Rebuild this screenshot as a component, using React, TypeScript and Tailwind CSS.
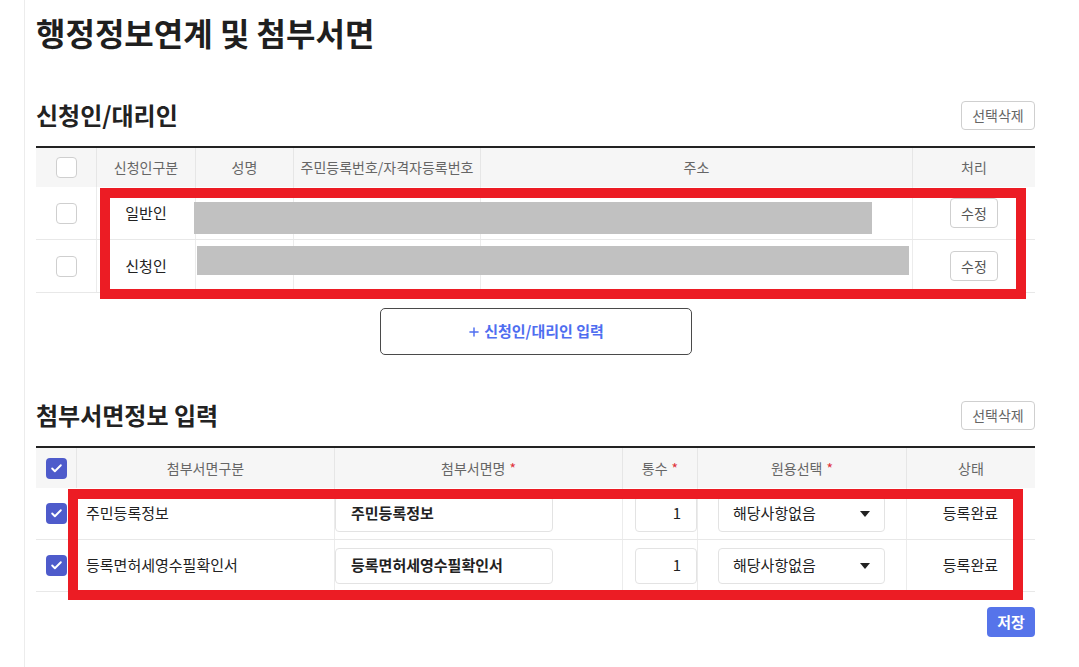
import { Check, Plus } from "lucide-react";

const font = { fontFamily: '"Noto Sans CJK KR", "Noto Sans", sans-serif' };

type Applicant = { kind: string; redact: { left: number; width: number; top: number; height: number } };

const applicants: Applicant[] = [
  { kind: "일반인", redact: { left: 158, width: 678, top: 15, height: 32 } },
  { kind: "신청인", redact: { left: 161, width: 712, top: 6, height: 29 } },
];

const attachments = [
  { category: "주민등록정보", name: "주민등록정보", count: "1", status: "등록완료" },
  { category: "등록면허세영수필확인서", name: "등록면허세영수필확인서", count: "1", status: "등록완료" },
];

function SmallButton({ label }: { label: string }) {
  return (
    <button
      type="button"
      className="h-[29px] w-[74px] rounded-[4px] border border-[#cfcfcf] bg-white text-[14px] text-[#666]"
    >
      {label}
    </button>
  );
}

function SectionHeader({ title }: { title: string }) {
  return (
    <div className="flex items-end justify-between">
      <h2 className="text-[24px] font-bold leading-[30px] text-[#222]">{title}</h2>
      <SmallButton label="선택삭제" />
    </div>
  );
}

function EmptyBox() {
  return <span className="block h-[21px] w-[21px] rounded-[4px] border border-[#cfcfcf] bg-white" />;
}

function CheckedBox() {
  return (
    <span className="flex h-[21px] w-[21px] items-center justify-center rounded-[4px] bg-[#4e5bcb]">
      <Check className="h-[13px] w-[13px] text-white" strokeWidth={3.5} />
    </span>
  );
}

function Required() {
  return <span className="ml-[4px] text-[#e0313a]">*</span>;
}

export default function App() {
  return (
    <div className="min-h-[667px] bg-white text-[#222]" style={font}>
      <div className="relative ml-[24px] w-[1011px] border-l border-[#ececec] pl-[11px] pt-[11px] pb-[30px]">
        <h1 className="text-[32px] font-bold leading-[43px] text-[#1f1f1f]">행정정보연계 및 첨부서면</h1>

        <div className="mt-[46px]">
          <SectionHeader title="신청인/대리인" />
          <div className="mt-[16px] border-t-2 border-[#222]">
            <div className="grid h-[39px] grid-cols-[60px_99px_98px_187px_432px_123px] bg-[#f6f6f6] text-[14px] text-[#666]">
              <div className="flex items-center justify-center">
                <EmptyBox />
              </div>
              <div className="flex items-center justify-center border-l border-[#e6e6e6]">신청인구분</div>
              <div className="flex items-center justify-center border-l border-[#e6e6e6]">성명</div>
              <div className="flex items-center justify-center border-l border-[#e6e6e6]">주민등록번호/자격자등록번호</div>
              <div className="flex items-center justify-center border-l border-[#e6e6e6]">주소</div>
              <div className="flex items-center justify-center border-l border-[#e6e6e6]">처리</div>
            </div>
            {applicants.map((a) => (
              <div
                key={a.kind}
                className="relative grid h-[53px] grid-cols-[60px_99px_98px_187px_432px_123px] border-b border-[#e8e8e8] text-[15px]"
              >
                <div className="flex items-center justify-center">
                  <EmptyBox />
                </div>
                <div className="flex items-center justify-center border-l border-[#ececec]">{a.kind}</div>
                <div className="border-l border-[#ececec]" />
                <div className="border-l border-[#ececec]" />
                <div className="border-l border-[#ececec]" />
                <div className="flex items-center justify-center border-l border-[#ececec]">
                  <button
                    type="button"
                    className="h-[30px] w-[48px] rounded-[4px] border border-[#cfcfcf] bg-white text-[14px] text-[#555]"
                  >
                    수정
                  </button>
                </div>
                <span
                  className="absolute bg-[#c1c1c1]"
                  style={{ left: a.redact.left, width: a.redact.width, top: a.redact.top, height: a.redact.height }}
                />
              </div>
            ))}
          </div>
          <div className="mt-[15px] flex justify-center">
            <button
              type="button"
              className="flex h-[47px] w-[312px] items-center justify-center gap-[3px] rounded-[5px] border border-[#4a4a4a] bg-white text-[15px] font-bold text-[#4f6ef0]"
            >
              <Plus className="h-[14px] w-[14px]" strokeWidth={2.5} />
              신청인/대리인 입력
            </button>
          </div>
        </div>

        <div className="mt-[45px]">
          <SectionHeader title="첨부서면정보 입력" />
          <div className="mt-[16px] border-t-2 border-[#222]">
            <div className="grid h-[40px] grid-cols-[40px_258px_288px_75px_209px_129px] bg-[#f6f6f6] text-[14px] text-[#666]">
              <div className="flex items-center justify-center">
                <CheckedBox />
              </div>
              <div className="flex items-center justify-center border-l border-[#e6e6e6]">첨부서면구분</div>
              <div className="flex items-center justify-center border-l border-[#e6e6e6]">
                첨부서면명
                <Required />
              </div>
              <div className="flex items-center justify-center border-l border-[#e6e6e6]">
                통수
                <Required />
              </div>
              <div className="flex items-center justify-center border-l border-[#e6e6e6]">
                원용선택
                <Required />
              </div>
              <div className="flex items-center justify-center border-l border-[#e6e6e6]">상태</div>
            </div>
            {attachments.map((r) => (
              <div
                key={r.category}
                className="grid h-[52px] grid-cols-[40px_258px_288px_75px_209px_129px] border-b border-[#e8e8e8] text-[15px]"
              >
                <div className="flex items-center justify-center">
                  <CheckedBox />
                </div>
                <div className="flex items-center pl-[10px]">{r.category}</div>
                <div className="flex items-center border-l border-[#ececec] pr-[69px]">
                  <div className="flex h-[36px] w-full items-center rounded-[4px] border border-[#e3e3e3] pl-[15px] font-bold">
                    {r.name}
                  </div>
                </div>
                <div className="flex items-center justify-end border-l border-[#ececec] pl-[11px]">
                  <div className="flex h-[36px] w-[62px] items-center justify-end rounded-[4px] border border-[#e3e3e3] pr-[15px] text-[15px]">
                    {r.count}
                  </div>
                </div>
                <div className="flex items-center border-l border-[#ececec] pl-[20px] pr-[21px]">
                  <div className="flex h-[36px] w-full items-center justify-between rounded-[4px] border border-[#e3e3e3] pl-[14px] pr-[14px]">
                    <span>해당사항없음</span>
                    <svg width="10" height="6" viewBox="0 0 10 6">
                      <path d="M0 0h10L5 6z" fill="#222" />
                    </svg>
                  </div>
                </div>
                <div className="flex items-center justify-end border-l border-[#ececec] pr-[37px]">{r.status}</div>
              </div>
            ))}
          </div>
          <div className="mt-[15px] flex justify-end">
            <button
              type="button"
              className="h-[30px] w-[48px] rounded-[4px] bg-[#5674ea] text-[15px] font-bold text-white"
            >
              저장
            </button>
          </div>
        </div>

        {/* annotation overlays */}
        <span className="pointer-events-none absolute left-[75px] top-[188px] h-[111px] w-[926px] border-[10px] border-[#ec1c24]" />
        <span className="pointer-events-none absolute left-[43px] top-[489px] h-[111px] w-[955px] border-[10px] border-[#ec1c24]" />
      </div>
    </div>
  );
}
